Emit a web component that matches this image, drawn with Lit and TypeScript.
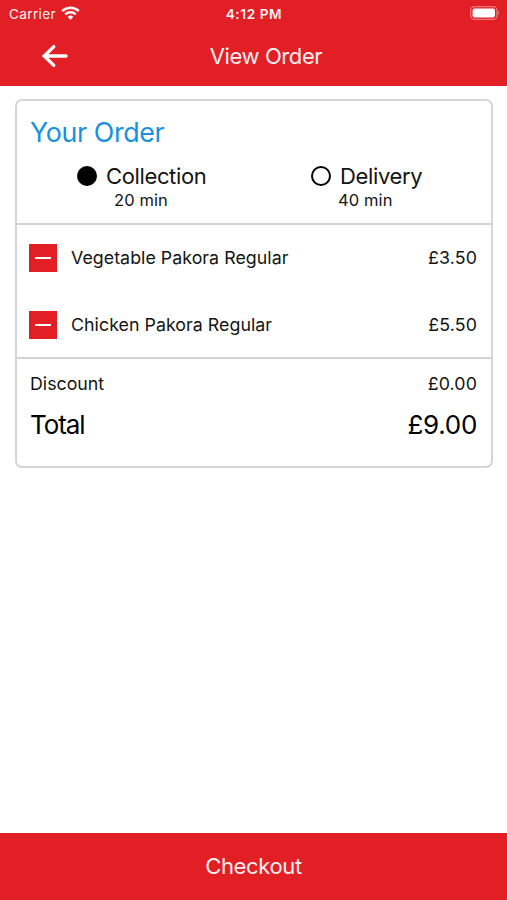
import { LitElement, html, css, svg } from "lit";
import { customElement, property, state } from "lit/decorators.js";
import { classMap } from "lit/directives/class-map.js";

interface OrderItem {
  name: string;
  price: number;
}

const money = (value: number) => `£${value.toFixed(2)}`;

const wifiIcon = svg`
  <path d="M1.2 5.2 A11.8 11.8 0 0 1 17.8 5.2" fill="none" stroke="#fff" stroke-width="2.5"/>
  <path d="M4.2 8.4 A7.6 7.6 0 0 1 14.8 8.4" fill="none" stroke="#fff" stroke-width="2.3"/>
  <path d="M9.5 13.8 L6.6 10.9 A4.2 4.2 0 0 1 12.4 10.9 Z" fill="#fff"/>`;

@customElement("status-bar")
export class StatusBar extends LitElement {
  static styles = css`
    :host {
      display: grid;
      grid-template-columns: 1fr auto 1fr;
      align-items: center;
      height: 28px;
      padding: 0 7px 0 9px;
      color: #fff;
      font-size: 13.6px;
    }
    .carrier {
      display: flex;
      align-items: center;
      gap: 5px;
      opacity: 0.94;
    }
    .carrier-name {
      letter-spacing: 0.35px;
    }
    .time {
      font-weight: 600;
      letter-spacing: 0.6px;
      margin-right: 1px;
      opacity: 0.94;
    }
    .battery {
      justify-self: end;
      margin-top: -2px;
    }
    svg {
      display: block;
    }
  `;

  render() {
    return html`
      <div class="carrier">
        <span class="carrier-name">Carrier</span>
        <svg width="19" height="16" viewBox="0 0 19 16">${wifiIcon}</svg>
      </div>
      <span class="time">4:12 PM</span>
      <svg class="battery" width="30" height="14" viewBox="0 0 30 14">
        <rect x="0.7" y="0.7" width="26.2" height="12.6" rx="3.6" fill="none" stroke="#fff" stroke-opacity="0.4" stroke-width="1.2"/>
        <rect x="2.6" y="2.6" width="22.4" height="8.8" rx="1.8" fill="#fff"/>
        <path d="M28 4.8 Q30 7 28 9.2 Z" fill="#fff" fill-opacity="0.45"/>
      </svg>
    `;
  }
}

@customElement("method-option")
export class MethodOption extends LitElement {
  @property() label = "";
  @property() wait = "";
  @property({ type: Boolean }) selected = false;

  static styles = css`
    :host {
      display: flex;
      flex-direction: column;
      color: #141414;
    }
    .choice {
      display: flex;
      align-items: center;
      gap: 9px;
      height: 27px;
      font-size: 22px;
      letter-spacing: -0.37px;
    }
    .radio {
      box-sizing: border-box;
      width: 20px;
      height: 20px;
      border: 2px solid #000;
      border-radius: 50%;
    }
    .radio.on {
      background: #000;
    }
    .wait {
      padding-left: 37px;
      font-size: 16.5px;
      line-height: 23px;
      letter-spacing: 0.1px;
    }
    :host([label="Delivery"]) .wait {
      padding-left: 27px;
    }
  `;

  render() {
    return html`
      <div class="choice">
        <span class=${classMap({ radio: true, on: this.selected })}></span>
        <span>${this.label}</span>
      </div>
      <span class="wait">${this.wait}</span>
    `;
  }
}

@customElement("app-root")
export class AppRoot extends LitElement {
  @state() private method = "Collection";
  @state() private items: OrderItem[] = [
    { name: "Vegetable Pakora Regular", price: 3.5 },
    { name: "Chicken Pakora Regular", price: 5.5 },
  ];
  @state() private discount = 0;

  static styles = css`
    :host {
      display: flex;
      flex-direction: column;
      height: 100vh;
      background: #fff;
      font-family: Inter, "Liberation Sans", sans-serif;
      overflow: hidden;
    }
    .top {
      height: 86px;
      background: #e31f26;
    }
    .nav {
      display: grid;
      grid-template-columns: 110px 1fr 85px;
      align-items: center;
      height: 56px;
      color: #fff;
    }
    .back {
      margin-left: 41px;
      display: block;
    }
    .title {
      justify-self: center;
      font-size: 22px;
      letter-spacing: -0.4px;
      opacity: 0.93;
    }
    .card {
      box-sizing: border-box;
      margin: 13px 14px 0 15px;
      height: 369px;
      border: 2px solid #d5d5d5;
      border-radius: 7px;
      color: #141414;
    }
    .head {
      height: 122px;
      border-bottom: 2px solid #d2d2d2;
    }
    h2 {
      margin: 0;
      padding: 12px 0 0 13px;
      font-size: 26.8px;
      font-weight: 400;
      line-height: 38px;
      letter-spacing: -0.36px;
      color: #1690e0;
    }
    .methods {
      display: flex;
      padding: 11px 0 0 60px;
    }
    .methods method-option {
      width: 234px;
      flex: none;
    }
    .methods method-option:last-child {
      width: auto;
    }
    .items {
      height: 132px;
      border-bottom: 2px solid #d2d2d2;
    }
    .row {
      display: flex;
      align-items: center;
      height: 67px;
      padding: 0 14px 0 12px;
      font-size: 17.8px;
      line-height: 20px;
    }
    .row span {
      margin-top: -1px;
    }
    .row .remove {
      display: grid;
      place-items: center;
      width: 28px;
      height: 28px;
      margin-right: 14px;
      background: #e31f26;
    }
    .remove::before {
      content: "";
      width: 16px;
      height: 2px;
      background: #fff;
    }
    .name {
      flex: 1;
      letter-spacing: 0.04px;
    }
    .price {
      letter-spacing: 0.12px;
    }
    .sum {
      display: flex;
      justify-content: space-between;
      align-items: center;
      height: 30px;
      padding: 9px 14px 0 13px;
      font-size: 17.8px;
    }
    .sum.total {
      height: 40px;
      padding-top: 6px;
      font-size: 26px;
      color: #000;
    }
    .total .label {
      letter-spacing: -1.1px;
    }
    .total .price {
      letter-spacing: -0.3px;
    }
    .checkout {
      display: grid;
      place-items: center;
      height: 67px;
      margin-top: auto;
      background: #e31f26;
      color: #fff;
      font-size: 22px;
      letter-spacing: -0.35px;
    }
    .checkout span {
      margin-top: -1px;
      opacity: 0.93;
    }
  `;

  render() {
    const total = this.items.reduce((sum, item) => sum + item.price, 0) - this.discount;
    return html`
      <header class="top">
        <status-bar></status-bar>
        <div class="nav">
          <svg class="back" width="28" height="24" viewBox="0 0 28 24">
            <path d="M12.8 2.6 L3.2 12 L12.8 21.4 M3.6 12 H25" fill="none" stroke="#fff" stroke-width="3.3" stroke-linecap="round"/>
          </svg>
          <span class="title">View Order</span>
        </div>
      </header>
      <section class="card">
        <div class="head">
          <h2>Your Order</h2>
          <div class="methods">
            <method-option label="Collection" wait="20 min" .selected=${this.method === "Collection"}></method-option>
            <method-option label="Delivery" wait="40 min" .selected=${this.method === "Delivery"}></method-option>
          </div>
        </div>
        <div class="items">
          ${this.items.map(
            (item) => html`
              <div class="row">
                <span class="remove"></span>
                <span class="name">${item.name}</span>
                <span class="price">${money(item.price)}</span>
              </div>
            `,
          )}
        </div>
        <div class="sum">
          <span class="label">Discount</span><span class="price">${money(this.discount)}</span>
        </div>
        <div class="sum total">
          <span class="label">Total</span><span class="price">${money(total)}</span>
        </div>
      </section>
      <footer class="checkout"><span>Checkout</span></footer>
    `;
  }
}
